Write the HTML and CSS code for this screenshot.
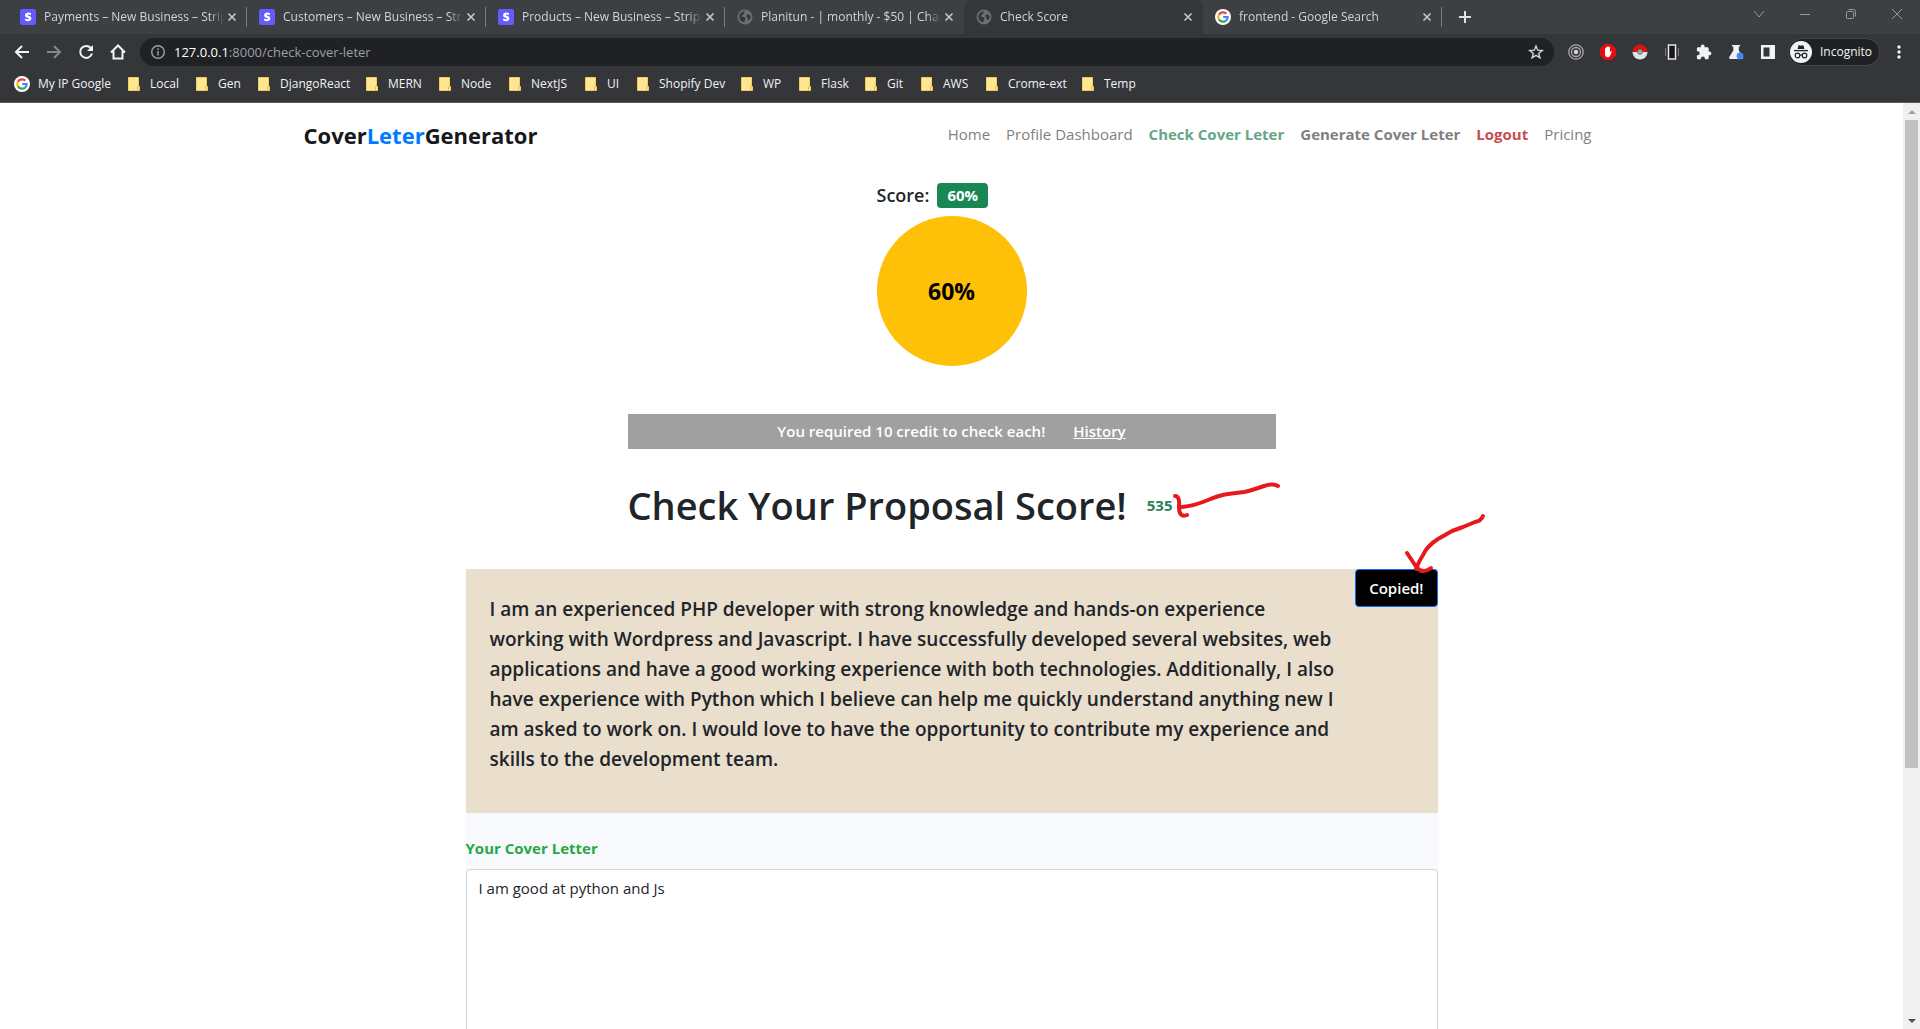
FILE: index.html
```html
<!DOCTYPE html>
<html lang="en">
<head>
<meta charset="utf-8">
<title>Check Score</title>
<link rel="stylesheet" href="styles.css">
</head>
<body>
<svg class="defs" aria-hidden="true">
  <defs>
    <symbol id="stripe" viewBox="0 0 16 16"><rect width="16" height="16" rx="2" fill="#635bff"/><path d="M10.9 4.1v2.1c-.8-.4-1.6-.6-2.3-.6-.6 0-.9.2-.9.5 0 .9 3.6.5 3.6 3.4 0 1.800-1.400 2.700-3.400 2.700-.9 0-1.900-.2-2.800-.6V9.400c.8.500 1.900.8 2.700.8.600 0 .9-.1.900-.5 0-1-3.600-.7-3.600-3.400 0-1.700 1.300-2.700 3.300-2.700.8 0 1.700.2 2.500.5z" fill="#fff"/></symbol>
    <symbol id="globe" viewBox="0 0 16 16"><circle cx="8" cy="8" r="7.500" fill="#6b6e72"/><path d="M8.500 2.200L7 3.500l.5 1.500-2 .8-.7 1.700 2.200.4 1.500 1.300-.6 1.500-.6 2.600c-3-.3-5-2.600-5-5.300 0-.6.100-1.200.3-1.700C3.200 3.900 5.500 2 8.500 2.200zM10 5.500l3 .3c.7 1.300.7 3 .1 4.300l-1.500 1.200-1.200-1.500.2-1.600-1.500-1z" fill="#35363a"/></symbol>
    <symbol id="google" viewBox="0 0 16 16"><circle cx="8" cy="8" r="8" fill="#fff"/><g fill="none" stroke-width="2.200"><path d="M11.300 4.600A4.700 4.700 0 0 0 3.900 5.800" stroke="#ea4335"/><path d="M3.900 5.800a4.700 4.700 0 0 0 0 4.400" stroke="#fbbc05"/><path d="M3.900 10.200a4.700 4.700 0 0 0 7.200 1.400" stroke="#34a853"/><path d="M11.100 11.600c1.100-1 1.600-2.200 1.500-3.600H8.200" stroke="#4285f4"/></g></symbol>
    <symbol id="close" viewBox="0 0 16 16"><path d="M4.500 4.500l7 7M11.500 4.500l-7 7" stroke="#c8cacc" stroke-width="1.600"/></symbol>
    <symbol id="folder" viewBox="0 0 12 14"><path d="M.5.500h10v9h1v4H.5z" fill="#ffe694" stroke="#f3cc56"/><path d="M9.500 9.500v4" stroke="#e9be42"/></symbol>
  </defs>
</svg>

<header class="browser">
  <div class="tabs">
    <div class="tab"><svg class="fav"><use href="#stripe"/></svg><span class="tab-title">Payments – New Business – Stripe</span><button class="tab-x" aria-label="Close tab"><svg><use href="#close"/></svg></button></div>
    <div class="tab"><svg class="fav"><use href="#stripe"/></svg><span class="tab-title">Customers – New Business – Stripe</span><button class="tab-x" aria-label="Close tab"><svg><use href="#close"/></svg></button></div>
    <div class="tab"><svg class="fav"><use href="#stripe"/></svg><span class="tab-title">Products – New Business – Stripe</span><button class="tab-x" aria-label="Close tab"><svg><use href="#close"/></svg></button></div>
    <div class="tab before-active"><svg class="fav"><use href="#globe"/></svg><span class="tab-title">Planitun - | monthly - $50 | Change</span><button class="tab-x" aria-label="Close tab"><svg><use href="#close"/></svg></button></div>
    <div class="tab active"><svg class="fav"><use href="#globe"/></svg><span class="tab-title">Check Score</span><button class="tab-x" aria-label="Close tab"><svg><use href="#close"/></svg></button></div>
    <div class="tab"><svg class="fav"><use href="#google"/></svg><span class="tab-title">frontend - Google Search</span><button class="tab-x" aria-label="Close tab"><svg><use href="#close"/></svg></button></div>
    <button class="new-tab" aria-label="New tab"><svg viewBox="0 0 14 14"><path d="M7 1v12M1 7h12" stroke="#dfe1e3" stroke-width="2"/></svg></button>
    <div class="window-controls">
      <button aria-label="Search tabs"><svg viewBox="0 0 12 12"><path d="M1 3l5 6 5-6"/></svg></button>
      <button aria-label="Minimize"><svg viewBox="0 0 12 12"><path d="M1 6.500h10"/></svg></button>
      <button aria-label="Restore"><svg viewBox="0 0 12 12"><rect x="1.500" y="3.500" width="7" height="7" rx="1"/><path d="M3.500 1.500h5a2 2 0 0 1 2 2v5"/></svg></button>
      <button aria-label="Close window"><svg viewBox="0 0 12 12"><path d="M1 1l10 10M11 1L1 11"/></svg></button>
    </div>
  </div>

  <div class="toolbar">
    <button class="tool" aria-label="Back"><svg viewBox="0 0 16 16"><path d="M15 8H2.500M8 2L2 8l6 6" fill="none" stroke="#f1f3f4" stroke-width="2"/></svg></button>
    <button class="tool" aria-label="Forward"><svg viewBox="0 0 16 16"><path d="M1 8h12.500M8 2l6 6-6 6" fill="none" stroke="#85878a" stroke-width="2"/></svg></button>
    <button class="tool" aria-label="Reload"><svg viewBox="0 0 16 16"><path d="M12.800 4A6 6 0 1 0 14 9.500" fill="none" stroke="#f1f3f4" stroke-width="2"/><path d="M15 1v6H9z" fill="#f1f3f4"/></svg></button>
    <button class="tool" aria-label="Home"><svg viewBox="0 0 16 16"><path d="M1 8.500L8 1.500l7 7M3.500 7v7.500h9V7" fill="none" stroke="#f1f3f4" stroke-width="2"/></svg></button>
    <div class="omnibox">
      <svg class="info" viewBox="0 0 16 16"><circle cx="8" cy="8" r="6.300" fill="none" stroke="#9aa0a6" stroke-width="1.400"/><path d="M8 7v4.500M8 4.300v1.600" stroke="#9aa0a6" stroke-width="1.500"/></svg>
      <div class="url" role="textbox" aria-label="Address"><b>127.0.0.1</b>:8000/check-cover-leter</div>
      <button class="star" aria-label="Bookmark"><svg viewBox="0 0 16 16"><path d="M8 2l1.700 4.200 4.500.3-3.500 2.900 1.200 4.400L8 11.400l-3.900 2.400 1.200-4.400L1.800 6.500l4.500-.3z" fill="none" stroke="#d5d7d9" stroke-width="1.400"/></svg></button>
    </div>
    <div class="extensions">
      <button aria-label="Target"><svg viewBox="0 0 16 16"><g fill="none" stroke="#a9abad" stroke-width="1.300"><circle cx="8" cy="8" r="7.200"/><circle cx="8" cy="8" r="4.500"/></g><circle cx="8" cy="8" r="2.200" fill="#d5d7d9"/></svg></button>
      <button aria-label="Ad blocker"><svg viewBox="0 0 16 16"><path d="M4.700 0h6.600L16 4.700v6.600L11.300 16H4.700L0 11.300V4.700z" fill="#e50d0d"/><path d="M5 8V4.500a.6.600 0 0 1 1.200 0V3.300a.6.600 0 0 1 1.200 0v-.5a.6.600 0 0 1 1.300 0v.5a.6.600 0 0 1 1.200 0v5.200l.8-1.300c.5-.6 1.300-.2 1.100.4l-1.500 4c-.5 1.200-1.200 1.700-2.300 1.700-1.900 0-3-1-3-3z" fill="#fff"/></svg></button>
      <button aria-label="Poke ball"><svg viewBox="0 0 16 16"><path d="M.5 8a7.500 7.500 0 0 1 15 0z" fill="#dc1212"/><path d="M.5 8a7.500 7.500 0 0 0 15 0z" fill="#dce8ec"/><circle cx="8" cy="8" r="2.400" fill="#9eb0b8" stroke="#777" stroke-width="1"/></svg></button>
      <button aria-label="Device"><svg viewBox="0 0 16 16"><path d="M1.500 4v8M14.500 4v8" stroke="#77797c"/><rect x="4.500" y="1" width="7" height="14" fill="#17181a" stroke="#eee" stroke-width="1.400"/></svg></button>
      <button aria-label="Extensions"><svg viewBox="0 0 16 16"><path d="M13.500 7.500h-.8V4.700c0-.8-.6-1.400-1.400-1.400H8.600v-.8a1.900 1.900 0 0 0-3.800 0v.8H2.200c-.7 0-1.300.6-1.300 1.400v2.500h.8a2 2 0 0 1 0 4H.9v2.700c0 .7.600 1.300 1.300 1.300h2.700v-.8a2 2 0 0 1 4 0v.8h2.400c.8 0 1.400-.6 1.400-1.300v-2.600h.8a1.900 1.900 0 0 0 0-3.800z" fill="#f1f3f4"/></svg></button>
      <button aria-label="Labs"><svg viewBox="0 0 16 16"><path d="M4 1h8v1.500h-1.200v4L15 13c.5 1-.1 2-1 2H2.300c-1 0-1.500-1-1-2l4-6.500v-4H4z" fill="#f1f3f4"/><circle cx="12" cy="12" r="3.400" fill="#4285f4"/></svg></button>
      <button aria-label="Side panel"><svg viewBox="0 0 16 16"><path d="M1 1h14v14H1zm2.500 2.500v9h6v-9z" fill="#f1f3f4" fill-rule="evenodd"/></svg></button>
    </div>
    <button class="profile"><svg viewBox="0 0 22 22"><circle cx="11" cy="11" r="11" fill="#f1f3f4"/><path d="M7.500 8l1-3.300c.2-.5.700-.6 1.100-.4l1.400.5 1.400-.5c.4-.2.9.1 1.100.4l1 3.300z" fill="#202124"/><path d="M4 9.600h14" stroke="#202124" stroke-width="1.300"/><g fill="none" stroke="#202124" stroke-width="1.200"><circle cx="7.500" cy="14.500" r="2.300"/><circle cx="14.500" cy="14.500" r="2.300"/><path d="M9.800 14.200c.8-.5 1.600-.5 2.400 0"/></g></svg>Incognito</button>
    <button class="menu" aria-label="Menu"><svg viewBox="0 0 16 16"><g fill="#f1f3f4"><circle cx="8" cy="3" r="1.700"/><circle cx="8" cy="8" r="1.700"/><circle cx="8" cy="13" r="1.700"/></g></svg></button>
  </div>

  <nav class="bookmarks" aria-label="Bookmarks">
    <a href="#"><svg class="fav"><use href="#google"/></svg>My IP Google</a>
    <a href="#"><svg class="folder"><use href="#folder"/></svg>Local</a>
    <a href="#"><svg class="folder"><use href="#folder"/></svg>Gen</a>
    <a href="#"><svg class="folder"><use href="#folder"/></svg>DjangoReact</a>
    <a href="#"><svg class="folder"><use href="#folder"/></svg>MERN</a>
    <a href="#"><svg class="folder"><use href="#folder"/></svg>Node</a>
    <a href="#"><svg class="folder"><use href="#folder"/></svg>NextJS</a>
    <a href="#"><svg class="folder"><use href="#folder"/></svg>UI</a>
    <a href="#"><svg class="folder"><use href="#folder"/></svg>Shopify Dev</a>
    <a href="#"><svg class="folder"><use href="#folder"/></svg>WP</a>
    <a href="#"><svg class="folder"><use href="#folder"/></svg>Flask</a>
    <a href="#"><svg class="folder"><use href="#folder"/></svg>Git</a>
    <a href="#"><svg class="folder"><use href="#folder"/></svg>AWS</a>
    <a href="#"><svg class="folder"><use href="#folder"/></svg>Crome-ext</a>
    <a href="#"><svg class="folder"><use href="#folder"/></svg>Temp</a>
  </nav>
</header>

<div class="viewport">
  <div class="page">
    <nav class="navbar">
      <a class="brand" href="#">Cover<span>Leter</span>Generator</a>
      <div class="links">
        <a href="#">Home</a>
        <a href="#">Profile Dashboard</a>
        <a class="check" href="#">Check Cover Leter</a>
        <a class="generate" href="#">Generate Cover Leter</a>
        <a class="logout" href="#">Logout</a>
        <a href="#">Pricing</a>
      </div>
    </nav>

    <main>
      <section class="score">
        <h2>Score: <span class="badge">60%</span></h2>
        <div class="circle">60%</div>
      </section>

      <div class="notice"><span>You required 10 credit to check each!</span><a href="#">History</a></div>

      <div class="heading">
        <h1>Check Your Proposal Score!</h1>
        <span class="credits">535</span>
        <svg class="mark mark-credits" viewBox="0 0 112 40"><path d="M107 11q-5-3-14 0-14 5-20 6l-16 2q-8 1-20 6-14 6-26 7M4 21q5 0 4 11 0 11 8 8"/></svg>
      </div>

      <section class="answer">
        <p>I am an experienced PHP developer with strong knowledge and hands-on experience<br>working with Wordpress and Javascript. I have successfully developed several websites, web<br>applications and have a good working experience with both technologies. Additionally, I also<br>have experience with Python which I believe can help me quickly understand anything new I<br>am asked to work on. I would love to have the opportunity to contribute my experience and<br>skills to the development team.</p>
        <button class="copy">Copied!</button>
        <svg class="mark mark-copy" viewBox="0 0 88 64"><path d="M80 7q-2 5-8 6l-12 5-11 4-14 8q-11 7-15 16-4 6-7 14M4 44l10 15q6 6 14 0"/></svg>
      </section>

      <form class="letter">
        <label for="cover">Your Cover Letter</label>
        <textarea id="cover">I am good at python and Js</textarea>
      </form>
    </main>
  </div>
  <div class="scrollbar" aria-hidden="true"><i class="up"></i><i class="thumb"></i><i class="down"></i></div>
</div>
</body>
</html>
```
FILE: styles.css
```css
* { box-sizing: border-box; }

body {
  margin: 0;
  height: 100vh;
  display: flex;
  flex-direction: column;
  overflow: hidden;
  background: #fff;
  color: #212529;
  font: 15px/24px "Open Sans", "Noto Sans", sans-serif;
}

button {
  display: flex;
  align-items: center;
  justify-content: center;
  padding: 0;
  border: 0;
  background: none;
  color: inherit;
  font: inherit;
}

a { color: inherit; text-decoration: none; }
svg { display: block; flex: none; }
.defs { position: absolute; width: 0; height: 0; }
.fav { width: 16px; height: 16px; }

/* browser chrome */
.browser {
  flex: none;
  background: #35363a;
  border-bottom: 1px solid #5b5c60;
  color: #f1f3f4;
  font-size: 12px;
  line-height: 16px;
}

.tabs {
  display: flex;
  height: 34px;
  padding-left: 8px;
  background: #3c4043;
}

.tab {
  display: flex;
  align-items: center;
  width: 239px;
  padding: 0 7px 0 12px;
  color: #d2d4d6;
  background: linear-gradient(#7b7e81, #7b7e81) right center / 1px 20px no-repeat;
}
.tab.before-active { background: none; }
.tab.active { background: #35363a; border-radius: 8px 8px 0 0; }

.tab-title {
  flex: 1;
  margin-left: 8px;
  overflow: hidden;
  white-space: nowrap;
  -webkit-mask-image: linear-gradient(to right, #000 92%, transparent);
  mask-image: linear-gradient(to right, #000 92%, transparent);
}
.tab-x svg { width: 16px; height: 16px; }

.new-tab { width: 46px; }
.new-tab svg { width: 14px; height: 14px; }

.window-controls { display: flex; margin-left: auto; }
.window-controls button { width: 46px; height: 28px; }
.window-controls svg { width: 12px; height: 12px; fill: none; stroke: #97999b; }

.toolbar {
  display: flex;
  align-items: center;
  height: 36px;
  padding: 0 13px 0 6px;
}
.tool { width: 32px; height: 28px; }
.tool svg { width: 16px; height: 16px; }

.omnibox {
  flex: 1;
  display: flex;
  align-items: center;
  height: 28px;
  margin-left: 6px;
  padding: 0 10px;
  gap: 8px;
  border-radius: 14px;
  background: #202124;
}
.info, .star svg { width: 16px; height: 16px; }
.url { flex: 1; font-size: 13px; color: #9aa0a6; }
.url b { font-weight: 400; color: #fff; }

.extensions { display: flex; margin-left: 6px; }
.extensions button { width: 32px; height: 28px; }
.extensions svg { width: 16px; height: 16px; }

.profile {
  width: 92px;
  height: 28px;
  margin-left: 4px;
  justify-content: flex-start;
  padding-left: 1px;
  gap: 8px;
  border: 1px solid #45464a;
  border-radius: 14px;
  background: #202124;
}
.profile svg { width: 22px; height: 22px; }
.menu { width: 16px; margin-left: 11px; }
.menu svg { width: 16px; height: 16px; }

.bookmarks {
  display: grid;
  grid-template-columns: 114px 68px 62px 108px 73px 70px 76px 52px 104px 58px 66px 56px 65px 96px 60px;
  align-items: center;
  height: 32px;
  padding: 0 0 4px 14px;
}
.bookmarks a { display: flex; align-items: center; gap: 10px; white-space: nowrap; }
.bookmarks .fav { margin-right: -2px; }
.folder { width: 12px; height: 14px; }

/* web page */
.viewport { flex: 1; min-height: 0; display: flex; }
.page { flex: 1; overflow: hidden; }

.navbar {
  display: flex;
  align-items: center;
  justify-content: space-between;
  max-width: 1320px;
  height: 64px;
  margin: 0 auto;
  padding: 0 12px;
}
.brand { font-size: 22px; line-height: 32px; font-weight: 700; color: #16181b; }
.brand span { color: #007bff; }
.links { display: flex; gap: 16px; padding: 0 8px 2px 0; color: #7f7f7f; }
.links .check { color: #65a688; font-weight: 700; }
.links .generate { font-weight: 700; }
.links .logout { color: #c74e4e; font-weight: 700; }

main {
  display: flex;
  flex-direction: column;
  align-items: center;
  max-width: 1320px;
  margin: 0 auto;
  padding: 16px 12px 0;
}

.score h2 {
  display: flex;
  align-items: center;
  gap: 8px;
  height: 25px;
  margin: 0 0 8px;
  font-size: 18px;
  line-height: 25px;
  font-weight: 600;
}
.badge {
  padding: 0 10px;
  border-radius: 4px;
  background: #198754;
  color: #fff;
  font-size: 15px;
  font-weight: 700;
}
.circle {
  display: flex;
  align-items: center;
  justify-content: center;
  width: 150px;
  height: 150px;
  border-radius: 50%;
  background: #ffc107;
  color: #000;
  font-size: 23px;
  font-weight: 700;
}

.notice {
  display: flex;
  justify-content: center;
  gap: 28px;
  width: 50%;
  margin-top: 48px;
  padding: 5px 0 6px;
  background: #a0a0a0;
  color: #fff;
  font-weight: 600;
}
.notice a { text-decoration: underline; }

.heading {
  position: relative;
  display: flex;
  align-items: center;
  gap: 20px;
  width: 50%;
  margin: 32px 0 40px;
}
h1 { margin: 0; font-size: 38px; line-height: 48px; font-weight: 600; white-space: nowrap; }
.credits { color: #2f7f5c; font-size: 15px; font-weight: 700; }

/* hand-drawn pointers */
.mark { position: absolute; fill: none; stroke: #e8191c; stroke-width: 4; stroke-linecap: round; stroke-linejoin: round; }
.mark-credits { width: 112px; height: 40px; right: -7px; top: -6px; overflow: visible; }
.mark-copy { width: 88px; height: 64px; right: -53px; top: -60px; overflow: visible; }

.answer {
  position: relative;
  width: 75%;
  padding: 25px 24px 39px;
  background: #eadecd;
}
.answer p { margin: 0; font-size: 19px; line-height: 30px; font-weight: 600; white-space: nowrap; }
.copy {
  position: absolute;
  top: 0;
  right: 0;
  padding: 6px 13px;
  border: 1px solid #0d6efd;
  border-radius: 4px;
  background: #000;
  color: #fff;
  font-weight: 600;
}

.letter { display: flex; flex-direction: column; width: 75%; padding-top: 23px; background: #f8f9fc; }
.letter label { margin-bottom: 9px; color: #28a745; font-weight: 700; }
.letter textarea {
  display: block;
  width: 100%;
  height: 280px;
  padding: 6px 12px;
  border: 1px solid #ced4da;
  border-radius: 4px;
  background: #fff;
  color: #212529;
  font: inherit;
  resize: none;
}

.scrollbar {
  display: flex;
  flex-direction: column;
  align-items: center;
  width: 17px;
  background: #f0f0f0;
}
.scrollbar i { display: block; }
.up, .down { border: 4px solid transparent; }
.up { margin: 3px 0 6px; border-bottom-color: #a3a3a3; }
.thumb { width: 13px; height: 70%; background: #c1c1c1; }
.down { margin: auto 0 2px; border-top-color: #505050; }
```
